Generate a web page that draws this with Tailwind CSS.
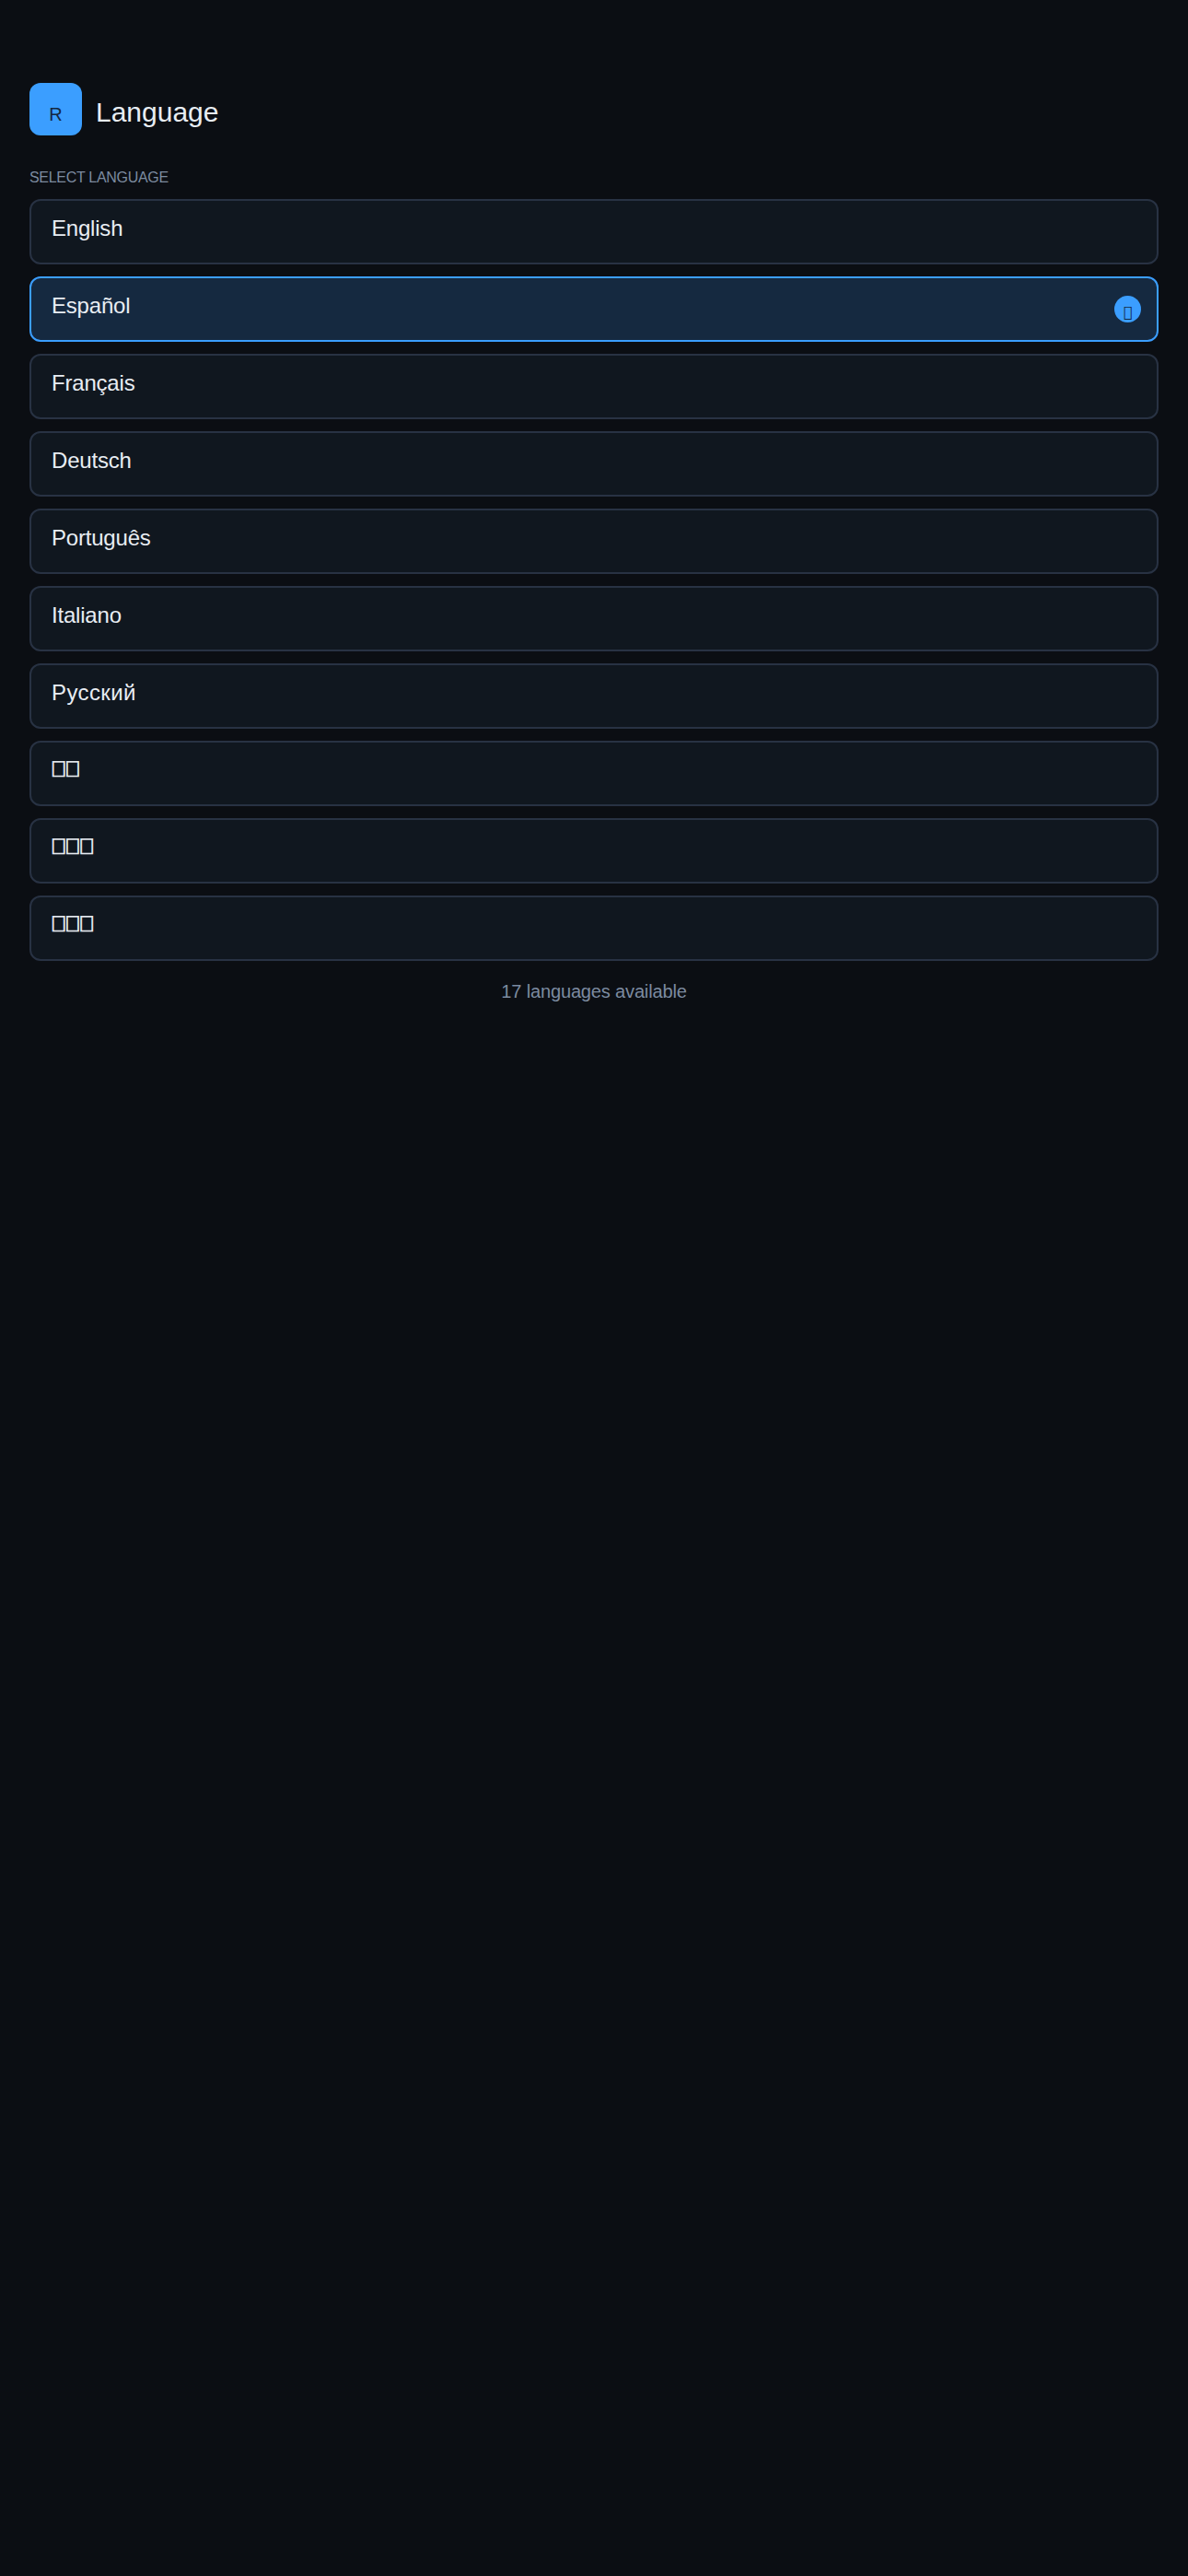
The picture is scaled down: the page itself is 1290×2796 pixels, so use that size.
<!DOCTYPE html>
<html lang="en">
<head>
<meta charset="utf-8">
<title>Language</title>
<script src="https://cdn.jsdelivr.net/npm/@tailwindcss/browser@4"></script>
</head>
<body class="bg-[#0b0e13] font-['Liberation_Sans',sans-serif] min-h-screen">
  <main class="px-8 pt-[90px]">
    <!-- Screen header -->
    <header class="flex items-center gap-[15px]">
      <div class="w-[57px] h-[57px] rounded-[12px] bg-[#3b9eff] flex items-center justify-center pt-[11px] text-[20px] text-[#14283f]">R</div>
      <h1 class="pt-[7px] text-[30px] leading-[36px] font-normal text-[#e8edf3]">Language</h1>
    </header>

    <p class="mt-[36px] text-[16px] leading-[20px] tracking-[-0.3px] text-[#7c8ba0]">SELECT LANGUAGE</p>

    <!-- Language list -->
    <ul class="mt-[13px] flex flex-col gap-[13px]">
      <li class="h-[71px] rounded-[12px] border-2 border-[#283243] bg-[#10171f] pl-[22px] pt-[15px] text-[24px] leading-[30px] tracking-[-0.2px] text-[#e8edf3]">English</li>
      <li class="relative h-[71px] rounded-[12px] border-2 border-[#3b9eff] bg-[#152940] pl-[22px] pt-[15px] text-[24px] leading-[30px] tracking-[-0.2px] text-[#e8edf3]">Español
        <span class="absolute right-[17px] top-[19px] w-[29px] h-[29px] rounded-full bg-[#3b9eff] flex items-center justify-center pt-[6px] font-['DejaVu_Sans'] text-[16px] leading-none tracking-normal text-[#14283f]">&#xE000;</span>
      </li>
      <li class="h-[71px] rounded-[12px] border-2 border-[#283243] bg-[#10171f] pl-[22px] pt-[15px] text-[24px] leading-[30px] tracking-[-0.2px] text-[#e8edf3]">Français</li>
      <li class="h-[71px] rounded-[12px] border-2 border-[#283243] bg-[#10171f] pl-[22px] pt-[15px] text-[24px] leading-[30px] tracking-[-0.2px] text-[#e8edf3]">Deutsch</li>
      <li class="h-[71px] rounded-[12px] border-2 border-[#283243] bg-[#10171f] pl-[22px] pt-[15px] text-[24px] leading-[30px] tracking-[-0.2px] text-[#e8edf3]">Português</li>
      <li class="h-[71px] rounded-[12px] border-2 border-[#283243] bg-[#10171f] pl-[22px] pt-[15px] text-[24px] leading-[30px] tracking-[-0.2px] text-[#e8edf3]">Italiano</li>
      <li class="h-[71px] rounded-[12px] border-2 border-[#283243] bg-[#10171f] pl-[22px] pt-[15px] text-[24px] leading-[30px] tracking-[0.4px] text-[#e8edf3]">Русский</li>
      <li class="h-[71px] rounded-[12px] border-2 border-[#283243] bg-[#10171f] pl-[21px] pt-[14px] font-bold text-[24px] leading-[30px] tracking-[-2.7px] [-webkit-text-stroke:0.7px_#e8edf3] text-[#e8edf3]">&#xE000;&#xE000;</li>
      <li class="h-[71px] rounded-[12px] border-2 border-[#283243] bg-[#10171f] pl-[21px] pt-[14px] font-bold text-[24px] leading-[30px] tracking-[-2.7px] [-webkit-text-stroke:0.7px_#e8edf3] text-[#e8edf3]">&#xE000;&#xE000;&#xE000;</li>
      <li class="h-[71px] rounded-[12px] border-2 border-[#283243] bg-[#10171f] pl-[21px] pt-[14px] font-bold text-[24px] leading-[30px] tracking-[-2.7px] [-webkit-text-stroke:0.7px_#e8edf3] text-[#e8edf3]">&#xE000;&#xE000;&#xE000;</li>
    </ul>

    <p class="mt-[19px] text-center text-[20px] leading-[28px] tracking-[-0.15px] text-[#7c8ba0]">17 languages available</p>
  </main>
</body>
</html>
